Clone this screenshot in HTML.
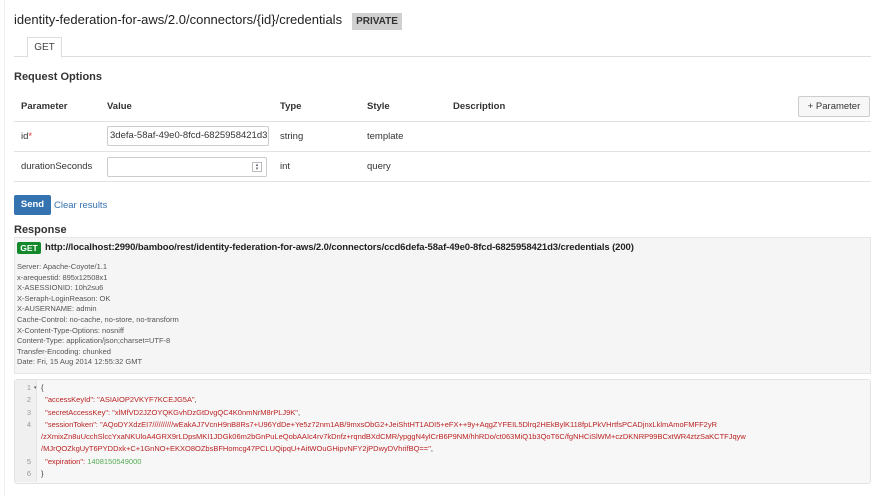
<!DOCTYPE html>
<html><head><style>
body{margin:0;width:871px;height:496px;background:#fff;font-family:"Liberation Sans",Arial,sans-serif;color:#333;position:relative;overflow:hidden}
.a{position:absolute}
.b{font-weight:bold}
.line{position:absolute;left:14px;right:0;height:1px;background:#e2e2e2}
.hd{font-size:7.5px;color:#555;line-height:10.6px}
.code{font-size:7.5px;line-height:12.3px;color:#b22}
</style></head><body>
<div class="a" style="left:4px;top:0;width:1px;height:496px;background:#eee"></div>
<div class="a" style="left:14px;top:12px;font-size:13px;color:#222;white-space:nowrap">identity-federation-for-aws/2.0/connectors/{id}/credentials</div>
<div class="a b" style="left:352px;top:13px;width:50px;height:17px;background:#d0d0d0;font-size:10px;line-height:17px;text-align:center;color:#333">PRIVATE</div>
<div class="line" style="top:56px;background:#ddd"></div>
<div class="a" style="left:27px;top:37px;width:33px;height:19px;border:1px solid #ddd;border-bottom:1px solid #fff;background:#fff;font-size:10px;text-align:center;line-height:19px;color:#444">GET</div>
<div class="a b" style="left:14px;top:71px;font-size:11px">Request Options</div>
<div class="a b" style="left:21px;top:101px;font-size:9.5px">Parameter</div>
<div class="a b" style="left:107px;top:101px;font-size:9.5px">Value</div>
<div class="a b" style="left:280px;top:101px;font-size:9.5px">Type</div>
<div class="a b" style="left:367px;top:101px;font-size:9.5px">Style</div>
<div class="a b" style="left:453px;top:101px;font-size:9.5px">Description</div>
<div class="a" style="left:798px;top:96px;width:70px;height:19px;border:1px solid #ccc;border-radius:2px;background:#f7f7f7;font-size:9.5px;line-height:19px;text-align:center;color:#333">+ Parameter</div>
<div class="line" style="top:121px"></div>
<div class="line" style="top:151px"></div>
<div class="line" style="top:181px"></div>
<div class="a" style="left:21px;top:131px;font-size:9.5px">id<span style="color:#d33">*</span></div>
<div class="a" style="left:107px;top:126px;width:158px;height:18px;border:1px solid #ccc;border-radius:2px;font-size:9.5px;line-height:18px;padding-left:2px;color:#333;overflow:hidden;white-space:nowrap">3defa-58af-49e0-8fcd-6825958421d3</div>
<div class="a" style="left:280px;top:131px;font-size:9.5px">string</div>
<div class="a" style="left:367px;top:131px;font-size:9.5px">template</div>
<div class="a" style="left:21px;top:161px;font-size:9.5px">durationSeconds</div>
<div class="a" style="left:107px;top:157px;width:158px;height:18px;border:1px solid #ccc;border-radius:2px"></div>
<div class="a" style="left:252px;top:162px;width:8px;height:8px;border:1px solid #bbb;font-size:5px;line-height:4px;text-align:center;color:#667">▴<br>▾</div>
<div class="a" style="left:280px;top:161px;font-size:9.5px">int</div>
<div class="a" style="left:367px;top:161px;font-size:9.5px">query</div>
<div class="a b" style="left:14px;top:195px;width:37px;height:20px;background:#3572b0;border-radius:2px;color:#fff;font-size:9.5px;line-height:20px;text-align:center">Send</div>
<div class="a" style="left:54px;top:200px;font-size:9.5px;color:#3572b0">Clear results</div>
<div class="a b" style="left:14px;top:224px;font-size:11px">Response</div>
<div class="a" style="left:14px;top:237px;right:0;height:135px;background:#f5f5f5;border:1px solid #e6e6e6"></div>
<div class="a b" style="left:17px;top:242px;width:24px;height:12px;background:#14892c;color:#fff;font-size:8.5px;line-height:12px;text-align:center;border-radius:2px">GET</div>
<div class="a b" style="left:45px;top:242px;font-size:9.5px;color:#222;white-space:nowrap;letter-spacing:-0.1px">http://localhost:2990/bamboo/rest/identity-federation-for-aws/2.0/connectors/ccd6defa-58af-49e0-8fcd-6825958421d3/credentials (200)</div>
<div class="a hd" style="left:17px;top:262px">Server: Apache-Coyote/1.1<br>x-arequestid: 895x12508x1<br>X-ASESSIONID: 10h2su6<br>X-Seraph-LoginReason: OK<br>X-AUSERNAME: admin<br>Cache-Control: no-cache, no-store, no-transform<br>X-Content-Type-Options: nosniff<br>Content-Type: application/json;charset=UTF-8<br>Transfer-Encoding: chunked<br>Date: Fri, 15 Aug 2014 12:55:32 GMT</div>
<div class="a" style="left:14px;top:379px;right:0;height:103px;background:#f7f7f7;border:1px solid #e2e2e2;border-radius:3px"></div>
<div class="a" style="left:15px;top:380px;width:21px;height:102px;background:#f0f0f0;border-right:1px solid #e4e4e4"></div>
<div class="a code" style="left:14px;top:382px;color:#999;text-align:right;width:17px">1<br>2<br>3<br>4<br><br><br>5<br>6</div>
<div class="a" style="left:34px;top:385px;font-size:5px;color:#555">▾</div>
<div class="a code" style="left:41px;top:382px;white-space:nowrap"><span style="color:#333">{</span><br>&nbsp;&nbsp;"accessKeyId": "ASIAIOP2VKYF7KCEJG5A"<span style="color:#333">,</span><br>&nbsp;&nbsp;"secretAccessKey": "xlMfVD2JZOYQKGvhDzGtDvgQC4K0nmNrM8rPLJ9K"<span style="color:#333">,</span><br>&nbsp;&nbsp;"sessionToken": "AQoDYXdzEI7//////////wEakAJ7VcnH9nB8Rs7+U96YdDe+Ye5z72nm1AB/9mxsObG2+JeiShtHT1ADI5+eFX++9y+AqgZYFEIL5Dlrq2HEkBylK118fpLPkVHrtfsPCADjnxLklmAmoFMFF2yR<br>/zXmixZn8uUcchSlccYxaNKUloA4GRX9rLDpsMKI1JDGk06m2bGnPuLeQobAAIc4rv7kDnfz+rqndBXdCMR/ypggN4ylCrB6P9NM/hhRDo/ct063MiQ1b3QoT6C/fgNHCiSlWM+czDKNRP99BCxtWR4ztzSaKCTFJqyw<br>/MJrQOZkgUyT6PYDDxk+C+1GnNO+EKXO8OZbsBFHomcg47PCLUQipqU+AitWOuGHipvNFY2jPDwyDVhrifBQ=="<span style="color:#333">,</span><br>&nbsp;&nbsp;"expiration": <span style="color:#5a5">1408150549000</span><br><span style="color:#333">}</span></div>
</body></html>
